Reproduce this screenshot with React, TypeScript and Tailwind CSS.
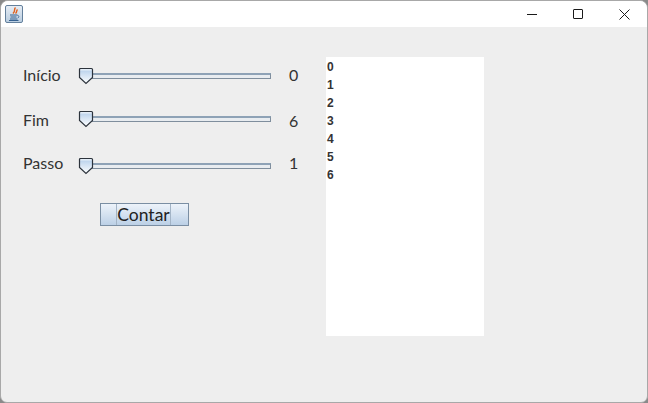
import React from "react";

function Thumb() {
  return (
    <svg width="16" height="18" viewBox="0 0 16 18" className="shrink-0 relative z-10">
      <defs>
        <linearGradient id="thumb-fill" x1="0" y1="0" x2="0" y2="1">
          <stop offset="0" stopColor="#f4f8fc" />
          <stop offset="0.2" stopColor="#c2d7ee" />
          <stop offset="1" stopColor="#ffffff" />
        </linearGradient>
      </defs>
      <path d="M1.5 2.5Q1.5 1.5 2.5 1.5H13.5Q14.5 1.5 14.5 2.5V10.5L8 16.5L1.5 10.5Z" fill="url(#thumb-fill)" stroke="#2c333c" strokeWidth="1.2" />
    </svg>
  );
}

function SliderRow({ label, value, rowClass, trackClass, labelClass, valueClass }: { label: string; value: string; rowClass: string; trackClass: string; labelClass: string; valueClass: string }) {
  return (
    <div className={`flex items-start ${rowClass}`}>
      <span className={`w-[55px] h-[22px] leading-[20px] text-[16px] text-[#333333] ${labelClass}`}>{label}</span>
      <div className={`w-[193px] flex items-center ${trackClass}`}>
        <Thumb />
        <div className="flex-1 -ml-[2px] h-[6px] bg-[#e8ecf0] border border-[#7f8e9d] border-l-0 border-t-2 border-t-[#8ea2b6]" />
      </div>
      <span className={`ml-[18px] h-[22px] leading-[20px] text-[16px] text-[#333333] ${valueClass}`}>{value}</span>
    </div>
  );
}

export default function App() {
  const numbers = ["0", "1", "2", "3", "4", "5", "6"];

  return (
    <div className="w-[648px] h-[403px] bg-[#8a8a8a] overflow-hidden font-['Lato',sans-serif]">
      <div className="w-full h-full rounded-t-[8px] rounded-b-[7px] bg-[#eeeeee] border border-[#a8a8a8] flex flex-col overflow-hidden">
        {/* title bar */}
        <div className="h-[26px] bg-white flex items-center shrink-0">
          <svg width="18" height="18" viewBox="0 0 18 18" className="ml-[4px]">
            <defs>
              <linearGradient id="icon-bg" x1="0" y1="0" x2="0" y2="1">
                <stop offset="0" stopColor="#e8eef5" />
                <stop offset="1" stopColor="#b9cde0" />
              </linearGradient>
            </defs>
            <rect x="0.5" y="0.5" width="17" height="17" rx="1.5" fill="url(#icon-bg)" stroke="#64809c" />
            <path d="M10.5 2.5C8.5 4.5 11 5.5 8 8.5M12.5 4.5C11 6 12.5 6.5 10.5 8.5" fill="none" stroke="#e2601c" strokeWidth="1.4" />
            <path d="M5 10H12.5M5.5 12H11.5M5 14H12.5M4 15.5H13.5" stroke="#35608f" strokeWidth="1" />
            <path d="M12.5 10.5Q15 10.5 13 13" fill="none" stroke="#35608f" strokeWidth="0.8" />
          </svg>
          <div className="ml-auto flex items-center">
            <div className="w-[46px] flex justify-center">
              <div className="w-[10px] h-px bg-[#1a1a1a]" />
            </div>
            <div className="w-[46px] flex justify-center">
              <div className="w-[10px] h-[10px] border border-[#1a1a1a] rounded-[1px]" />
            </div>
            <div className="w-[46px] flex justify-center">
              <svg width="11" height="11" viewBox="0 0 11 11">
                <path d="M0.5 0.5L10.5 10.5M10.5 0.5L0.5 10.5" stroke="#1a1a1a" strokeWidth="1" />
              </svg>
            </div>
          </div>
        </div>

        {/* content */}
        <div className="flex-1 flex items-start pt-[30px] pl-[22px]">
          <div className="w-[303px] pt-[8px]">
            <SliderRow label="Início" value="0" rowClass="h-[44px]" trackClass="h-[22px]" labelClass="" valueClass="" />
            <SliderRow label="Fim" value="6" rowClass="h-[44px]" trackClass="h-[20px]" labelClass="pt-[1px]" valueClass="pt-[2px]" />
            <SliderRow label="Passo" value="1" rowClass="h-[50px]" trackClass="h-[26px]" labelClass="" valueClass="" />
            <button className="ml-[77px] w-[89px] h-[23px] border border-[#7a8ea3] bg-gradient-to-b from-[#edf3fa] to-[#bcd0e6] flex text-[17.5px] leading-[21px] text-[#222222]">
              <span className="w-[16px] border-r border-[#a3b4c6]" />
              <span className="flex-1 text-center">Contar</span>
              <span className="w-[18px] border-l border-[#a3b4c6]" />
            </button>
          </div>
          <div className="w-[158px] h-[279px] bg-white pt-[1px] pl-[1px] font-['Liberation_Sans',sans-serif] font-bold text-[12px] leading-[18px] text-[#333333]">
            {numbers.map((n) => (
              <div key={n}>{n}</div>
            ))}
          </div>
        </div>
      </div>
    </div>
  );
}
